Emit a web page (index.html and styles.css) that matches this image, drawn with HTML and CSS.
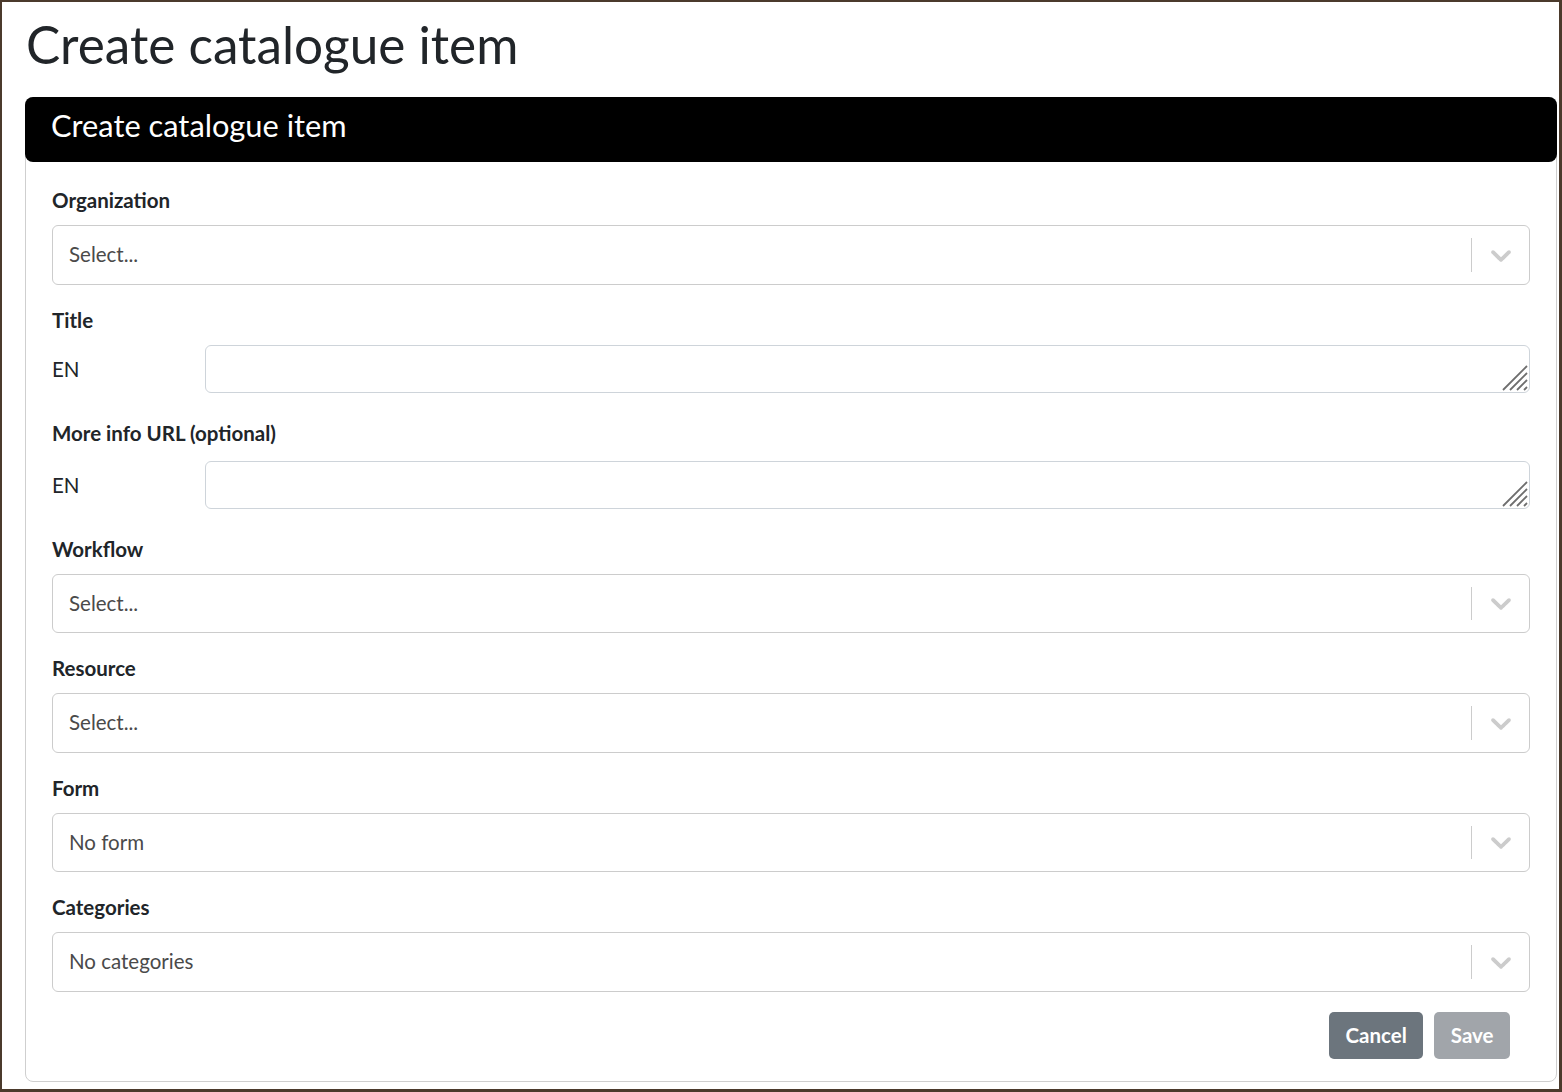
FILE: index.html
```html
<!DOCTYPE html>
<html lang="en">
<head>
<meta charset="utf-8">
<title>Create catalogue item</title>
<link rel="stylesheet" href="styles.css">
</head>
<body>
<div class="frame">
  <h1 class="page-title">Create catalogue item</h1>
  <div class="card">
    <div class="card-header">Create catalogue item</div>
    <div class="card-body">
      <div class="form-group">
        <label class="form-label">Organization</label>
        <div class="select">
          <div class="select-value placeholder">Select...</div>
          <div class="select-sep"></div>
          <div class="select-ind"><svg viewBox="0 0 20 20" width="34" height="34"><path d="M4.516 7.548c0.436-0.446 1.043-0.481 1.576 0l3.908 3.747 3.908-3.747c0.533-0.481 1.141-0.446 1.574 0 0.436 0.445 0.408 1.197 0 1.615-0.406 0.418-4.695 4.502-4.695 4.502-0.217 0.223-0.502 0.335-0.787 0.335s-0.57-0.112-0.789-0.335c0 0-4.287-4.084-4.695-4.502s-0.436-1.17 0-1.615z"/></svg></div>
        </div>
      </div>
      <div class="form-group">
        <label class="form-label">Title</label>
        <div class="lang-row">
          <span class="lang">EN</span>
          <div class="textarea-wrap">
            <textarea class="textarea" rows="1"></textarea>
            <svg class="grip" viewBox="0 0 26 26" width="26" height="26"><path d="M1 25L25 1M8 25L25 8M15 25L25 15M22 25L25 22"/></svg>
          </div>
        </div>
      </div>
      <div class="form-group">
        <label class="form-label form-label-tall">More info URL (optional)</label>
        <div class="lang-row">
          <span class="lang">EN</span>
          <div class="textarea-wrap">
            <textarea class="textarea" rows="1"></textarea>
            <svg class="grip" viewBox="0 0 26 26" width="26" height="26"><path d="M1 25L25 1M8 25L25 8M15 25L25 15M22 25L25 22"/></svg>
          </div>
        </div>
      </div>
      <div class="form-group">
        <label class="form-label">Workflow</label>
        <div class="select">
          <div class="select-value placeholder">Select...</div>
          <div class="select-sep"></div>
          <div class="select-ind"><svg viewBox="0 0 20 20" width="34" height="34"><path d="M4.516 7.548c0.436-0.446 1.043-0.481 1.576 0l3.908 3.747 3.908-3.747c0.533-0.481 1.141-0.446 1.574 0 0.436 0.445 0.408 1.197 0 1.615-0.406 0.418-4.695 4.502-4.695 4.502-0.217 0.223-0.502 0.335-0.787 0.335s-0.57-0.112-0.789-0.335c0 0-4.287-4.084-4.695-4.502s-0.436-1.17 0-1.615z"/></svg></div>
        </div>
      </div>
      <div class="form-group">
        <label class="form-label">Resource</label>
        <div class="select">
          <div class="select-value placeholder">Select...</div>
          <div class="select-sep"></div>
          <div class="select-ind"><svg viewBox="0 0 20 20" width="34" height="34"><path d="M4.516 7.548c0.436-0.446 1.043-0.481 1.576 0l3.908 3.747 3.908-3.747c0.533-0.481 1.141-0.446 1.574 0 0.436 0.445 0.408 1.197 0 1.615-0.406 0.418-4.695 4.502-4.695 4.502-0.217 0.223-0.502 0.335-0.787 0.335s-0.57-0.112-0.789-0.335c0 0-4.287-4.084-4.695-4.502s-0.436-1.17 0-1.615z"/></svg></div>
        </div>
      </div>
      <div class="form-group">
        <label class="form-label">Form</label>
        <div class="select">
          <div class="select-value">No form</div>
          <div class="select-sep"></div>
          <div class="select-ind"><svg viewBox="0 0 20 20" width="34" height="34"><path d="M4.516 7.548c0.436-0.446 1.043-0.481 1.576 0l3.908 3.747 3.908-3.747c0.533-0.481 1.141-0.446 1.574 0 0.436 0.445 0.408 1.197 0 1.615-0.406 0.418-4.695 4.502-4.695 4.502-0.217 0.223-0.502 0.335-0.787 0.335s-0.57-0.112-0.789-0.335c0 0-4.287-4.084-4.695-4.502s-0.436-1.17 0-1.615z"/></svg></div>
        </div>
      </div>
      <div class="form-group">
        <label class="form-label">Categories</label>
        <div class="select">
          <div class="select-value">No categories</div>
          <div class="select-sep"></div>
          <div class="select-ind"><svg viewBox="0 0 20 20" width="34" height="34"><path d="M4.516 7.548c0.436-0.446 1.043-0.481 1.576 0l3.908 3.747 3.908-3.747c0.533-0.481 1.141-0.446 1.574 0 0.436 0.445 0.408 1.197 0 1.615-0.406 0.418-4.695 4.502-4.695 4.502-0.217 0.223-0.502 0.335-0.787 0.335s-0.57-0.112-0.789-0.335c0 0-4.287-4.084-4.695-4.502s-0.436-1.17 0-1.615z"/></svg></div>
        </div>
      </div>
      <div class="actions">
        <button class="btn btn-cancel" type="button">Cancel</button>
        <button class="btn btn-save" type="button" disabled>Save</button>
      </div>
    </div>
  </div>
</div>
</body>
</html>
```
FILE: styles.css
```css
* { box-sizing: border-box; }
html, body { margin: 0; padding: 0; background: #fff; }
body {
  font-family: Lato, "Open Sans", "Liberation Sans", sans-serif;
  font-size: 20.5px;
  line-height: 1.5;
  color: #212529;
}
.frame {
  width: 1562px;
  height: 1092px;
  border-style: solid;
  border-color: #4b3a2c;
  border-width: 2px 3px 3px 2px;
  padding: 0 0 0 23px;
  overflow: hidden;
}
.page-title {
  margin: 0;
  padding: 12px 0 0 1px;
  font-size: 51.3px;
  font-weight: 400;
  line-height: 60px;
  height: 95px;
  color: #212529;
}
.card {
  width: 1532px;
  height: 985px;
  border: 1px solid #cfcfcf;
  border-radius: 8px;
  background: #fff;
}
.card-header {
  margin: -1px -1px 0 -1px;
  background: #000;
  color: #fff;
  border-radius: 8px;
  height: 65px;
  padding: 9px 0 0 26px;
  font-size: 30.8px;
  line-height: 40px;
}
.card-body {
  padding: 23px 26px 0 26px;
}
.form-group { margin-bottom: 20px; }
.form-label {
  display: block;
  font-weight: 700;
  line-height: 30px;
  margin-bottom: 10px;
}
.form-label-tall { margin-bottom: 13px; }
.select {
  display: flex;
  align-items: center;
  height: 59.5px;
  border: 1px solid #cccccc;
  border-radius: 6px;
  background: #fff;
}
.select-value {
  flex: 1;
  padding-left: 16px;
  color: #4a4a4a;
}
.select-sep {
  width: 1px;
  align-self: stretch;
  margin: 12px 0;
  background: #cccccc;
}
.select-ind {
  width: 57px;
  display: flex;
  justify-content: center;
  align-items: center;
}
.select-ind svg { fill: #cccccc; display: block; }
.lang-row {
  display: grid;
  grid-template-columns: 153px 1fr;
  align-items: center;
  margin-bottom: 25px;
}
.lang { line-height: 30px; }
.textarea-wrap { position: relative; }
.textarea {
  display: block;
  width: 100%;
  height: 48px;
  border: 1px solid #ced4da;
  border-radius: 6px;
  font: inherit;
  padding: 6px 12px;
  resize: none;
}
.grip {
  position: absolute;
  right: 2px;
  bottom: 2px;
  stroke: #6e6e6e;
  stroke-width: 1.8;
  fill: none;
}
.actions {
  display: flex;
  justify-content: flex-end;
  gap: 11px;
  padding-right: 20px;
}
.btn {
  font-family: inherit;
  font-size: 20.5px;
  font-weight: 700;
  line-height: 30px;
  height: 47.5px;
  padding: 0 16.5px;
  color: #fff;
  border: none;
  border-radius: 5px;
}
.btn-cancel { background: #6c757d; }
.btn-save { background: #a1a5aa; }
```
